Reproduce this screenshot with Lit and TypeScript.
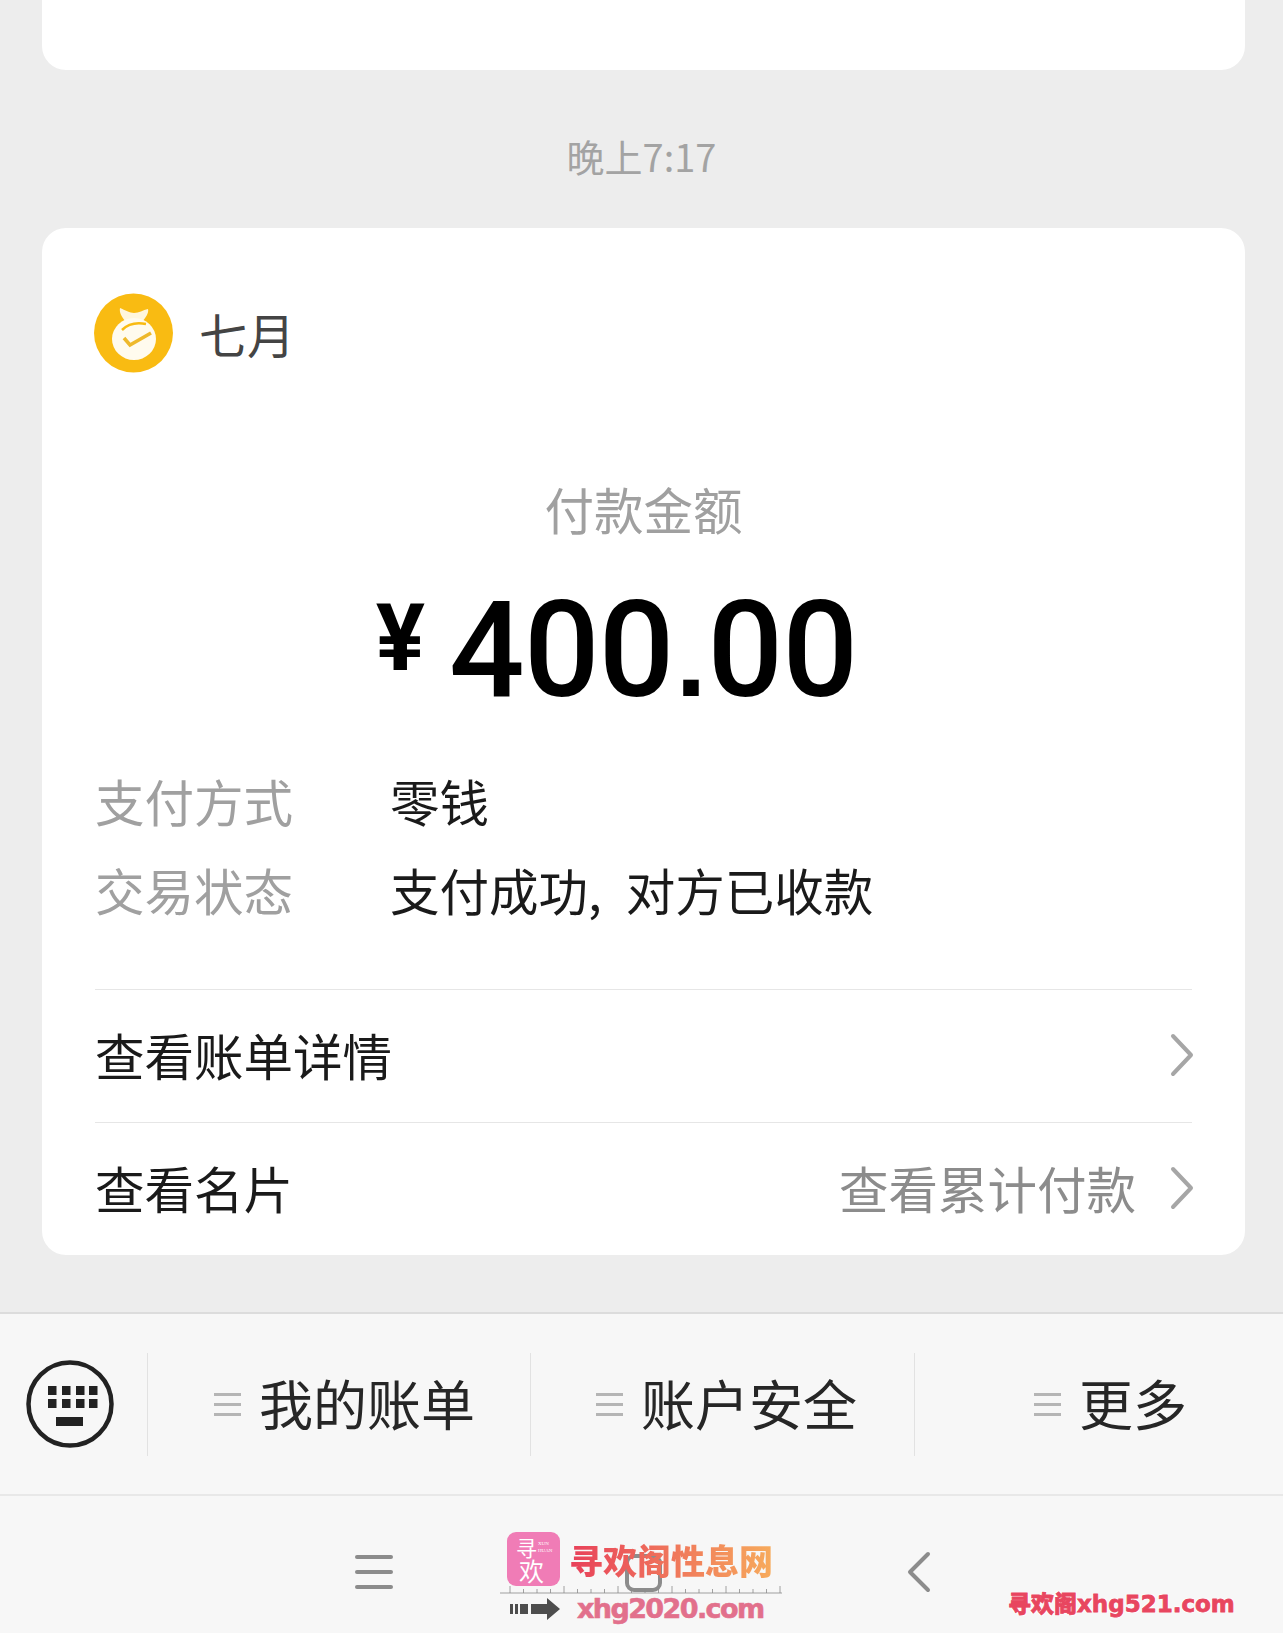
import { css, html, LitElement, svg } from "lit";
import { customElement } from "lit/decorators.js";

const menuIcon = html`<span class="menu-icon"><i></i><i></i><i></i></span>`;

const keyX = [0, 14, 28, 41];

@customElement("app-root")
export class AppRoot extends LitElement {
    static styles = css`
        :host {
            display: block;
            font-family: "Noto Sans CJK SC", "Noto Sans", sans-serif;
        }

        .page {
            position: relative;
            height: 1633px;
            overflow: hidden;
            display: flex;
            flex-direction: column;
            background-color: #ededed;
        }

        .top-card {
            flex: none;
            height: 70px;
            margin: 0 38px 0 42px;
            background-color: #fff;
            border-radius: 0 0 24px 24px;
        }

        .time {
            flex: none;
            height: 158px;
            box-sizing: border-box;
            padding: 14px 0 2px;
            display: flex;
            align-items: center;
            justify-content: center;
            font-size: 38px;
            color: #a3a3a3;
        }

        .card {
            flex: none;
            height: 1027px;
            box-sizing: border-box;
            margin: 0 38px 0 42px;
            padding: 65px 53px 0;
            background-color: #fff;
            border-radius: 24px;
            display: flex;
            flex-direction: column;
        }

        .payee {
            display: flex;
            align-items: center;
            gap: 26px;
            height: 79px;
            font-size: 48px;
            color: #444;
        }

        .payee svg {
            width: 80px;
            height: 80px;
            margin-left: -2px;
        }

        .amount-label {
            margin-top: 107px;
            height: 60px;
            line-height: 60px;
            text-align: center;
            font-size: 49.5px;
            color: #a0a0a0;
        }

        .amount {
            margin-top: 45px;
            height: 132px;
            padding-right: 54px;
            display: flex;
            justify-content: center;
            align-items: flex-start;
            gap: 24px;
            font-family: Roboto, "Liberation Sans", sans-serif;
            font-weight: 500;
            color: #000;
        }

        .amount .yen {
            font-size: 92px;
            font-weight: 700;
            line-height: 100px;
            margin-top: 5px;
        }

        .amount .value {
            font-size: 133px;
            line-height: 133px;
            letter-spacing: -0.7px;
        }

        /* the reference has a square point, Roboto's is round here */
        .amount .point {
            font-family: "Liberation Sans", sans-serif;
            font-size: 110px;
            font-weight: 700;
            margin: 0 2px;
        }

        .info {
            margin-top: 40px;
            display: flex;
            flex-direction: column;
        }

        .info-row {
            display: flex;
            height: 89px;
            align-items: center;
            font-size: 49.5px;
            color: #1a1a1a;
        }

        .info-row .key {
            width: 295px;
            color: #a0a0a0;
        }

        .info-row .value {
            word-spacing: 13px;
        }

        .links {
            margin-top: 55px;
        }

        .link {
            height: 133px;
            box-sizing: border-box;
            padding-bottom: 3px;
            border-top: 1px solid #e6e6e6;
            display: flex;
            align-items: center;
            justify-content: space-between;
            font-size: 49.5px;
            color: #1a1a1a;
        }

        .link .side {
            display: flex;
            align-items: center;
            gap: 34px;
            color: #8c8c8c;
        }

        .link svg {
            width: 24px;
            height: 44px;
            display: block;
            margin-right: -2px;
        }

        .spacer {
            flex: 1;
        }

        .tabs {
            flex: none;
            height: 184px;
            box-sizing: border-box;
            background-color: #f7f7f7;
            border-top: 2px solid #dcdcdc;
            border-bottom: 2px solid #e8e8e8;
            display: grid;
            grid-template-columns: 147px 383px 384px 1fr;
            align-items: center;
        }

        .keyboard {
            padding-left: 25px;
        }

        .keyboard svg {
            display: block;
            width: 90px;
            height: 90px;
        }

        .tab {
            height: 103px;
            box-sizing: border-box;
            border-left: 1px solid #e2e2e2;
            display: flex;
            align-items: center;
            gap: 18px;
            font-size: 54px;
            color: #262626;
        }

        .tab span:last-child {
            margin-top: -4px;
        }

        .tab.bills {
            padding-left: 66px;
        }

        .tab.safety {
            padding-left: 65px;
        }

        .tab.more {
            padding-left: 119px;
        }

        .menu-icon {
            width: 27px;
            display: flex;
            flex-direction: column;
            gap: 7px;
        }

        .menu-icon i {
            display: block;
            height: 3px;
            background-color: #b5b5b5;
        }

        .nav {
            flex: none;
            height: 137px;
            background-color: #f7f7f7;
            display: flex;
            align-items: center;
            padding: 15px 0 0 355px;
            box-sizing: border-box;
        }

        .nav .burger {
            width: 38px;
            display: flex;
            flex-direction: column;
            gap: 11px;
        }

        .nav .burger i {
            display: block;
            height: 4px;
            border-radius: 2px;
            background-color: #8c8c8c;
        }

        .nav .home {
            width: 37px;
            height: 38px;
            box-sizing: border-box;
            margin: 2px 0 0 232px;
            border: 4px solid #8c8c8c;
            border-radius: 9px;
        }

        .nav svg {
            display: block;
            width: 26px;
            height: 42px;
            margin-left: 244px;
        }

        /* watermarks stamped on top of the screenshot */
        .stamp {
            position: absolute;
            left: 500px;
            top: 1532px;
            width: 282px;
        }

        .stamp-head {
            display: flex;
            align-items: flex-start;
            gap: 9px;
            height: 54px;
            padding-left: 7px;
        }

        .stamp-logo {
            flex: none;
            width: 53px;
            height: 54px;
            border-radius: 9px;
            background-color: #f07cb6;
            color: #fff;
            box-sizing: border-box;
            padding: 4px 0 0 9px;
            display: flex;
            flex-direction: column;
        }

        .stamp-logo .upper {
            display: flex;
            align-items: center;
            gap: 1px;
            height: 22px;
            font-size: 21px;
            line-height: 22px;
        }

        .stamp-logo .lower {
            font-size: 25px;
            line-height: 24px;
            margin-left: 3px;
        }

        .stamp-logo small {
            font-family: "Liberation Serif", serif;
            font-size: 5px;
            line-height: 7px;
        }

        .stamp-title {
            margin-top: 8px;
            font-family: "Noto Sans CJK SC", sans-serif;
            font-size: 34px;
            line-height: 40px;
            font-weight: 900;
            white-space: nowrap;
            background: linear-gradient(90deg, #e8405a, #f7ab5c);
            -webkit-background-clip: text;
            background-clip: text;
            color: transparent;
        }

        .stamp-ruler {
            display: block;
            width: 282px;
            height: 10px;
            margin-top: -2px;
        }

        .stamp-foot {
            display: flex;
            align-items: center;
            gap: 17px;
            padding-left: 10px;
            height: 30px;
        }

        .stamp-foot svg {
            display: block;
            width: 50px;
            height: 22px;
        }

        .stamp-foot b {
            font-family: "DejaVu Sans", sans-serif;
            font-size: 27px;
            letter-spacing: -1.6px;
            line-height: 30px;
            color: #e2708c;
            -webkit-text-stroke: 0.6px #e2708c;
        }

        .brand {
            position: absolute;
            left: 1008px;
            top: 1586px;
            font-family: "DejaVu Sans", "Noto Sans CJK SC", sans-serif;
            font-size: 23px;
            line-height: 32px;
            font-weight: 900;
            white-space: nowrap;
            color: #e8465f;
            -webkit-text-stroke: 0.8px #e8465f;
            text-shadow: -1px -1px 0 #fff, 1px -1px 0 #fff, -1px 1px 0 #fff, 1px 1px 0 #fff;
        }

        .brand span {
            font-family: "Noto Sans CJK SC", sans-serif;
        }
    `;

    chevron() {
        return html`<svg viewBox="0 0 24 44" fill="none" stroke="#a6a6a6" stroke-width="4" stroke-linecap="round" stroke-linejoin="round">
            <path d="M3 3 L21 22 L3 41"></path>
        </svg>`;
    }

    render() {
        return html`
            <div class="page">
                <div class="top-card"></div>
                <div class="time">晚上7:17</div>
                <div class="card">
                    <div class="payee">
                        <svg viewBox="0 0 80 80">
                            <circle cx="40.5" cy="40" r="39.5" fill="#f9bb12"></circle>
                            <path d="M27 15 C32 17 37 20 41 20 C46 20 50 17 55 16 C56 20 53 24 49 29 L33 29 C29 24 26 20 27 15 Z" fill="#fff6dc"></path>
                            <ellipse cx="41" cy="46" rx="22" ry="21" fill="#fffbee"></ellipse>
                            <path d="M29 37 Q38 28 53 31" fill="none" stroke="#f9bb12" stroke-width="2.5"></path>
                            <path d="M31 45 L37 52 L58 40" fill="none" stroke="#eeb92c" stroke-width="3.5"></path>
                        </svg>
                        七月
                    </div>
                    <div class="amount-label">付款金额</div>
                    <div class="amount">
                        <span class="yen">¥</span>
                        <span class="value">400<span class="point">.</span>00</span>
                    </div>
                    <div class="info">
                        <div class="info-row"><span class="key">支付方式</span><span>零钱</span></div>
                        <div class="info-row"><span class="key">交易状态</span><span class="value">支付成功, 对方已收款</span></div>
                    </div>
                    <div class="links">
                        <div class="link">
                            <span>查看账单详情</span>
                            ${this.chevron()}
                        </div>
                        <div class="link">
                            <span>查看名片</span>
                            <span class="side">查看累计付款 ${this.chevron()}</span>
                        </div>
                    </div>
                </div>
                <div class="spacer"></div>
                <div class="tabs">
                    <div class="keyboard">
                        <svg viewBox="0 0 90 90">
                            <circle cx="45" cy="45" r="41.5" fill="none" stroke="#222" stroke-width="4.5"></circle>
                            ${[0, 13].map((dy) =>
                                keyX.map((dx) => svg`<rect x=${23 + dx} y=${27 + dy} width="8.5" height="9" fill="#222"></rect>`),
                            )}
                            <rect x="31" y="58" width="27" height="9" fill="#222"></rect>
                        </svg>
                    </div>
                    <div class="tab bills">${menuIcon}<span>我的账单</span></div>
                    <div class="tab safety">${menuIcon}<span>账户安全</span></div>
                    <div class="tab more">${menuIcon}<span>更多</span></div>
                </div>
                <div class="nav">
                    <span class="burger"><i></i><i></i><i></i></span>
                    <span class="home"></span>
                    <svg viewBox="0 0 26 42" fill="none" stroke="#8c8c8c" stroke-width="4" stroke-linecap="round" stroke-linejoin="round">
                        <path d="M22 3 L4 21 L22 39"></path>
                    </svg>
                </div>

                <div class="stamp">
                    <div class="stamp-head">
                        <div class="stamp-logo">
                            <div class="upper">寻<small>XUN<br />HUAN</small></div>
                            <div class="lower">欢</div>
                        </div>
                        <div class="stamp-title">寻欢阁性息网</div>
                    </div>
                    <svg class="stamp-ruler" viewBox="0 0 282 10">
                        <path d="M0 9 H282" stroke="#bdbdbd" stroke-width="1.5"></path>
                        ${Array.from({ length: 21 }, (_, i) => svg`<path d="M${10 + i * 13.5} 9 V${i % 4 === 0 ? 2 : 5}" stroke="#8a8a8a" stroke-width="0.8"></path>`)}
                    </svg>
                    <div class="stamp-foot">
                        <svg viewBox="0 0 50 22" fill="#4d4d4d">
                            <rect x="0" y="6" width="3" height="10"></rect>
                            <rect x="5" y="6" width="3" height="10"></rect>
                            <rect x="10" y="6" width="8" height="10"></rect>
                            <path d="M21 6 H37 V0 L50 11 L37 22 V16 H21 Z"></path>
                        </svg>
                        <b>xhg2020.com</b>
                    </div>
                </div>
                <div class="brand"><span>寻欢阁</span>xhg521.com</div>
            </div>
        `;
    }
}
